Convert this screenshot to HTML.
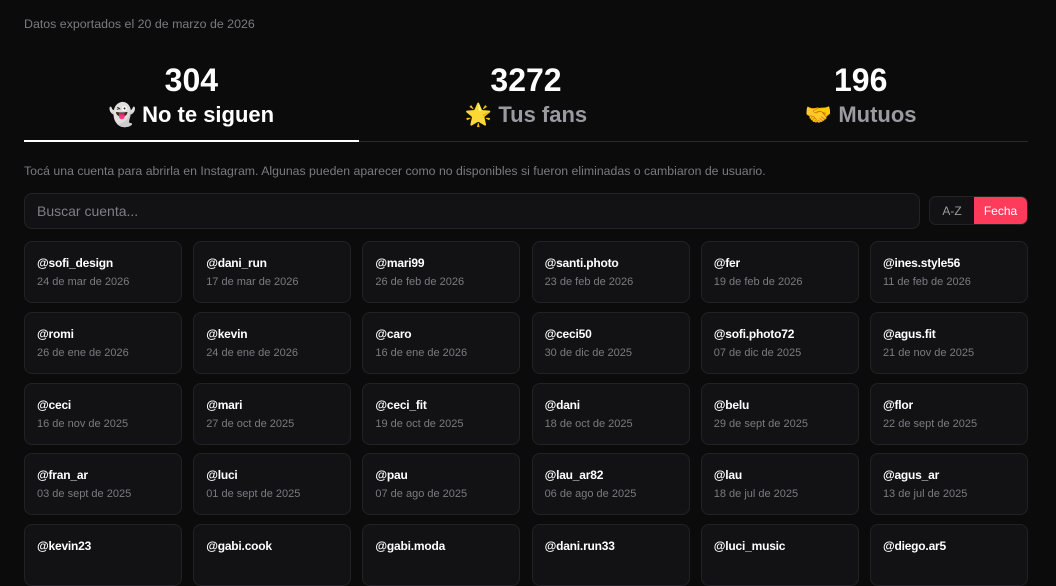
<!DOCTYPE html>
<html><head><meta charset="utf-8"><style>
*{box-sizing:border-box;margin:0;padding:0}
body{width:1056px;height:555px;overflow:hidden;background:#0b0b0c;font-family:"Liberation Sans","Noto Sans CJK JP",sans-serif;color:#fff}
.wrap{position:absolute;left:24px;width:1004px;top:0}
.top{position:absolute;top:17px;font-size:12.4px;color:#7a7a80}
.tabs{position:absolute;top:62px;left:0;width:1004px;height:80px;border-bottom:1px solid #2a2a2e;display:flex}
.tab{flex:1;text-align:center;position:relative}
.tab .n{font-size:32px;font-weight:bold;line-height:36px}
.tab .l{font-size:22px;font-weight:bold;line-height:30px;color:#9a9aa0;margin-top:2px}
.tab.a .l{color:#fff}
.tab.a:after{content:"";position:absolute;left:0;right:0;bottom:-1px;height:2px;background:#fff}
.hint{position:absolute;top:164px;font-size:12.3px;color:#7a7a80;white-space:nowrap}
.search{position:absolute;top:193px;left:0;width:896px;height:36px;background:#121215;border:1px solid #232327;border-radius:8px;font-size:14px;color:#7e7e85;padding:9px 12px}
.sort{position:absolute;top:196px;left:905px;width:99px;height:29px;border:1px solid #232327;border-radius:7px;background:#121215;display:flex;overflow:hidden;font-size:12px}
.sort span{display:flex;align-items:center;justify-content:center}
.sort .az{width:44px;color:#9a9aa0}
.sort .f{flex:1;background:#ff3b5c;color:#fff}
.grid{position:absolute;top:241px;left:0;display:grid;grid-template-columns:repeat(6,158px);column-gap:11.2px;row-gap:8.75px}
.c{height:62px;background:#121215;border:1px solid #222226;border-radius:8px;padding:13px 12px}
.c b{display:block;font-size:12px;line-height:16px;letter-spacing:-0.2px}
.c i{display:block;font-style:normal;font-size:11px;color:#7a7a80;margin-top:5px}
</style></head><body><div class="wrap">
<div class="top">Datos exportados el 20 de marzo de 2026</div>
<div class="tabs">
<div class="tab a"><div class="n">304</div><div class="l">👻 No te siguen</div></div>
<div class="tab"><div class="n">3272</div><div class="l">🌟 Tus fans</div></div>
<div class="tab"><div class="n">196</div><div class="l">🤝 Mutuos</div></div>
</div>
<div class="hint">Tocá una cuenta para abrirla en Instagram. Algunas pueden aparecer como no disponibles si fueron eliminadas o cambiaron de usuario.</div>
<div class="search">Buscar cuenta...</div>
<div class="sort"><span class="az">A-Z</span><span class="f">Fecha</span></div>
<div class="grid">
<div class="c"><b>@sofi_design</b><i>24 de mar de 2026</i></div>
<div class="c"><b>@dani_run</b><i>17 de mar de 2026</i></div>
<div class="c"><b>@mari99</b><i>26 de feb de 2026</i></div>
<div class="c"><b>@santi.photo</b><i>23 de feb de 2026</i></div>
<div class="c"><b>@fer</b><i>19 de feb de 2026</i></div>
<div class="c"><b>@ines.style56</b><i>11 de feb de 2026</i></div>
<div class="c"><b>@romi</b><i>26 de ene de 2026</i></div>
<div class="c"><b>@kevin</b><i>24 de ene de 2026</i></div>
<div class="c"><b>@caro</b><i>16 de ene de 2026</i></div>
<div class="c"><b>@ceci50</b><i>30 de dic de 2025</i></div>
<div class="c"><b>@sofi.photo72</b><i>07 de dic de 2025</i></div>
<div class="c"><b>@agus.fit</b><i>21 de nov de 2025</i></div>
<div class="c"><b>@ceci</b><i>16 de nov de 2025</i></div>
<div class="c"><b>@mari</b><i>27 de oct de 2025</i></div>
<div class="c"><b>@ceci_fit</b><i>19 de oct de 2025</i></div>
<div class="c"><b>@dani</b><i>18 de oct de 2025</i></div>
<div class="c"><b>@belu</b><i>29 de sept de 2025</i></div>
<div class="c"><b>@flor</b><i>22 de sept de 2025</i></div>
<div class="c"><b>@fran_ar</b><i>03 de sept de 2025</i></div>
<div class="c"><b>@luci</b><i>01 de sept de 2025</i></div>
<div class="c"><b>@pau</b><i>07 de ago de 2025</i></div>
<div class="c"><b>@lau_ar82</b><i>06 de ago de 2025</i></div>
<div class="c"><b>@lau</b><i>18 de jul de 2025</i></div>
<div class="c"><b>@agus_ar</b><i>13 de jul de 2025</i></div>
<div class="c"><b>@kevin23</b><i></i></div>
<div class="c"><b>@gabi.cook</b><i></i></div>
<div class="c"><b>@gabi.moda</b><i></i></div>
<div class="c"><b>@dani.run33</b><i></i></div>
<div class="c"><b>@luci_music</b><i></i></div>
<div class="c"><b>@diego.ar5</b><i></i></div>
</div>
</div></body></html>
